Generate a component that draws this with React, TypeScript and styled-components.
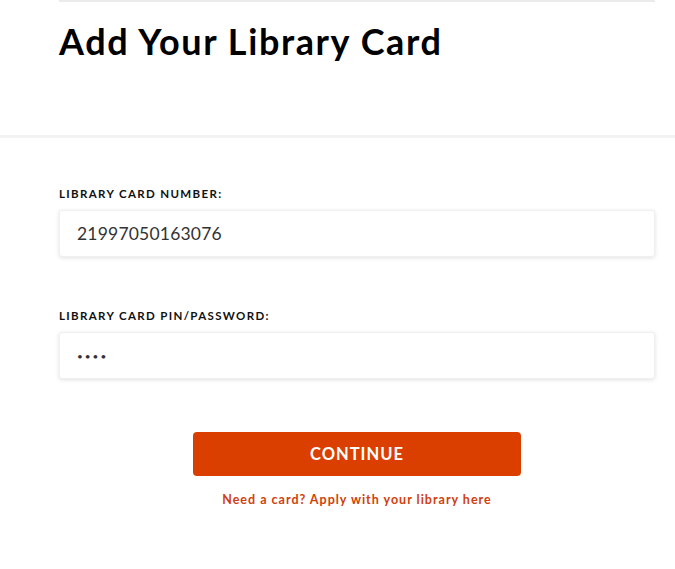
import styled, { createGlobalStyle } from "styled-components";

const Global = createGlobalStyle`
  body {
    margin: 0;
    background: #fff;
    font-family: "Lato", "Open Sans", sans-serif;
  }
`;

const App = () => {
  return (
    <Page>
      <Global />
      <Header>
        <TopBar />
        <Title>Add Your Library Card</Title>
      </Header>
      <Divider />
      <Form onSubmit={(e) => e.preventDefault()}>
        <Field>
          <Label>Library card number:</Label>
          <Input defaultValue="21997050163076" />
        </Field>
        <Field>
          <Label>Library card PIN/password:</Label>
          <Input type="password" defaultValue="1234" $secret />
        </Field>
        <Actions>
          <Button type="submit">Continue</Button>
          <Link href="#">Need a card? Apply with your library here</Link>
        </Actions>
      </Form>
    </Page>
  );
};

export default App;

const Page = styled.div`
  width: 100%;
  min-height: 569px;
  background: #fff;
`;

const Header = styled.div`
  padding: 0 20px 0 59px;
  height: 135px;
`;

const TopBar = styled.div`
  height: 2px;
  background: #ebebeb;
`;

const Title = styled.h1`
  margin: 17px 0 0;
  font-size: 36px;
  font-weight: 700;
  color: #000;
  letter-spacing: 1.6px;
  line-height: 44px;
`;

const Divider = styled.div`
  height: 3px;
  background: #f2f2f2;
`;

const Form = styled.form`
  padding: 49px 20px 0 59px;
  display: flex;
  flex-direction: column;
`;

const Field = styled.div`
  display: flex;
  flex-direction: column;
  margin-bottom: 52px;
`;

const Label = styled.label`
  font-size: 11.5px;
  font-weight: 700;
  text-transform: uppercase;
  color: #111;
  letter-spacing: 1.35px;
  margin-bottom: 10px;
`;

const Input = styled.input<{ $secret?: boolean }>`
  height: 47px;
  box-sizing: border-box;
  border: 1px solid #f0f0f0;
  border-radius: 3px;
  box-shadow: 0 1px 4px rgba(0, 0, 0, 0.12);
  padding: 0 17px;
  font-family: "Lato", sans-serif;
  font-size: ${(p) => (p.$secret ? "10px" : "17.5px")};
  letter-spacing: ${(p) => (p.$secret ? "2px" : "0.2px")};
  color: #333;
  outline: none;
  background: #fff;
`;

const Actions = styled.div`
  display: flex;
  flex-direction: column;
  align-items: center;
  margin-top: 1px;
`;

const Button = styled.button`
  width: 328px;
  height: 44px;
  border: none;
  border-radius: 4px;
  background: #db3f00;
  color: #fff;
  font-family: "Lato", sans-serif;
  font-size: 16.5px;
  font-weight: 700;
  letter-spacing: 1px;
  text-transform: uppercase;
  cursor: pointer;
`;

const Link = styled.a`
  margin-top: 16px;
  font-size: 12.5px;
  font-weight: 700;
  letter-spacing: 1px;
  color: #d0400a;
  text-decoration: none;
`;
